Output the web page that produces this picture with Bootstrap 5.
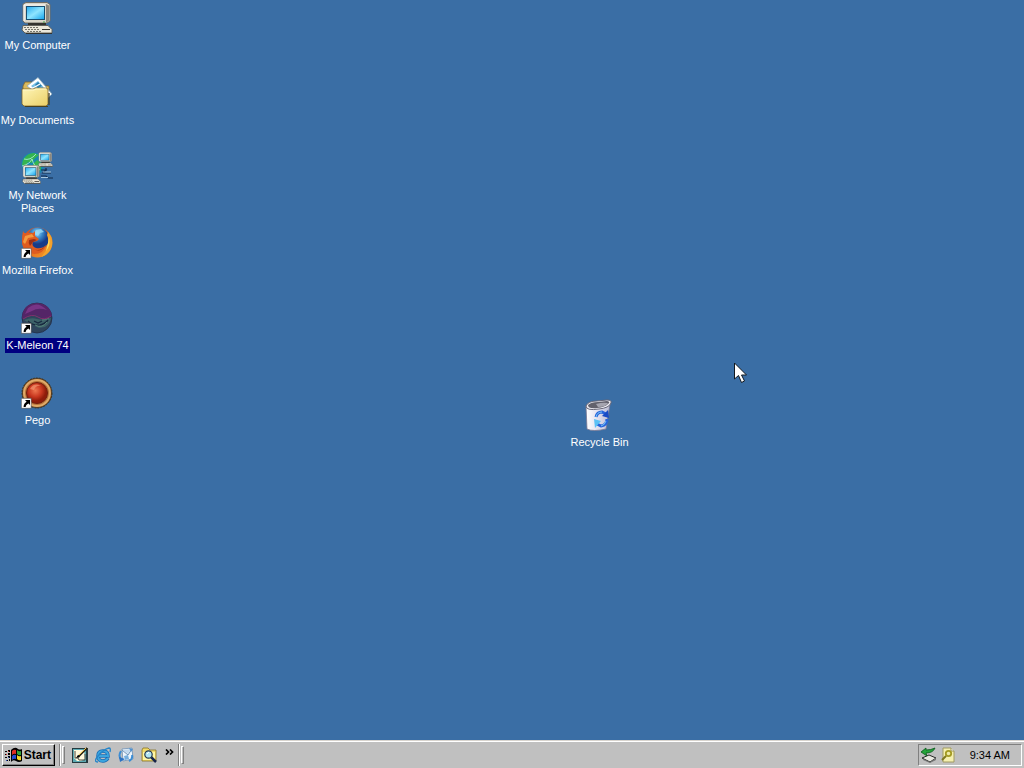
<!DOCTYPE html>
<html lang="en">
<head>
<meta charset="utf-8">
<meta name="viewport" content="width=device-width, initial-scale=1">
<title>Desktop</title>
<link href="https://cdn.jsdelivr.net/npm/bootstrap@5.3.0/dist/css/bootstrap.min.css" rel="stylesheet">
<style>
  body { background: #3a6ea5; font: 11px/13px "Liberation Sans", Arial, sans-serif; color: #000; cursor: default; }
  .desk-icon { width: 75px; height: 75px; padding-top: 2px; color: #fff; line-height: 13px; cursor: default; }
  .desk-icon:hover { color: #fff; }
  .desk-icon > svg { width: 32px; height: 32px; margin: 0 1px 5px 0; flex: none; }
  .desk-label { padding: 0 2px; }
  .desk-label.long { white-space: nowrap; padding: 0; }
  .desk-label.selected { background: #000080; padding: 1px; margin-top: -1px; white-space: nowrap; }
  .bin { left: 562px; top: 397px; }
  .pointer { left: 734px; top: 362px; width: 13px; height: 22px; }
  .taskbar { height: 28px; background: #c0c0c0; border-top: 1px solid #d8d4ce; box-shadow: inset 0 1px #fff; padding: 3px 2px 2px; }
  .start { width: 53px; height: 22px; padding: 0 3px 0 2px; border: 1px solid; border-color: #fff #000 #000 #fff; box-shadow: inset -1px -1px #808080; background: #c0c0c0; font-weight: bold; font-size: 12px; color: #000; border-radius: 0; }
  .start svg { width: 18px; height: 16px; flex: none; }
  .divider { width: 2px; height: 22px; border-left: 1px solid #808080; border-right: 1px solid #fff; margin-right: 1px; }
  .grip { width: 3px; height: 18px; border: 1px solid; border-color: #fff #808080 #808080 #fff; }
  .quick { width: 23px; height: 22px; padding: 3px 4px 3px 3px; border: 0; background: transparent; }
  .quick svg, .tray svg { width: 16px; height: 16px; display: block; }
  .more { width: 17px; height: 22px; padding: 0 0 6px; border: 0; background: transparent; }
  .more svg { width: 9px; height: 6px; display: block; margin: 0 auto; }
  .tray { height: 22px; width: 104px; padding: 0 11px 0 2px; border: 1px solid; border-color: #808080 #fff #fff #808080; }
  .tray time { padding-top: 1px; }
</style>
</head>
<body class="vh-100 d-flex flex-column overflow-hidden user-select-none">
<svg width="0" height="0" class="position-absolute" aria-hidden="true">
  <defs>
    <linearGradient id="screen" x1="0" y1="0" x2="1" y2="1"><stop offset="0" stop-color="#2baef0"/><stop offset=".5" stop-color="#8fe5ff"/><stop offset="1" stop-color="#18a6ee"/></linearGradient>
    <linearGradient id="paper" x1="0" y1="0" x2="1" y2="1"><stop offset="0" stop-color="#fff6b8"/><stop offset="1" stop-color="#ebcf66"/></linearGradient>
    <linearGradient id="fox" x1="0" y1="0" x2="1" y2="1"><stop offset="0" stop-color="#d9481c"/><stop offset=".55" stop-color="#e8701d"/><stop offset="1" stop-color="#f4a32a"/></linearGradient>
    <radialGradient id="globe" cx=".45" cy=".25"><stop offset="0" stop-color="#9fdcff"/><stop offset=".5" stop-color="#3888ca"/><stop offset="1" stop-color="#173b88"/></radialGradient>
    <radialGradient id="ball" cx=".42" cy=".38"><stop offset="0" stop-color="#ee7750"/><stop offset=".6" stop-color="#c93820"/><stop offset="1" stop-color="#8f1c0b"/></radialGradient>
    <linearGradient id="can" x1="0" x2="1"><stop offset="0" stop-color="#fff"/><stop offset=".4" stop-color="#e8e6f2"/><stop offset="1" stop-color="#b9bbd4"/></linearGradient>
    <g id="shortcut"><path fill="#fff" stroke="#444" stroke-width=".6" d="M.3 21.300h9.900v10H.3z"/><path d="M4 23h5v5l-1.500-1.500C5.600 27.500 4.800 28.500 4.700 30H2.600c0-2.500 1.200-4.200 3-5.300z"/></g>
    <g id="pc">
      <path fill="#d9d5c8" stroke="#716e66" d="M2 2 5 .5h21l3 2V19l-3 2H4l-2-2z"/>
      <path fill="#8b877e" d="m25 2 3 1.500v15L25 21z"/><path fill="none" stroke="#fff" d="M3 19V3h21"/>
      <path fill="#174f73" d="M5 4h19v14H5z"/><path fill="url(#screen)" d="M6 5h17v12H6z"/>
      <path fill="#34322e" d="M7 21h18v2.500H7z"/><path fill="#ebe7da" stroke="#5d5b53" stroke-width=".9" d="M2 23.500h25l4 4V31H4l-3-3z"/>
      <path stroke="#77766c" stroke-width="1.100" stroke-dasharray="2 1" d="M3 25.500h15M4 27.500h15M6 29.500h14"/><path fill="#33322e" d="M21 27h8v1h-8zM5 31h26v1H5z"/><path fill="#4ba34b" d="M22 19.500h2v1h-2z"/>
    </g>
  </defs>
</svg>

<main class="flex-grow-1 position-relative">
  <nav class="d-flex flex-column align-items-start" aria-label="Desktop">
    <a href="#" class="desk-icon d-flex flex-column align-items-center text-center text-decoration-none">
      <svg viewBox="0 0 32 32" aria-hidden="true"><use href="#pc"/></svg>
      <span class="desk-label">My Computer</span>
    </a>
    <a href="#" class="desk-icon d-flex flex-column align-items-center text-center text-decoration-none">
      <svg viewBox="0 0 32 32" aria-hidden="true">
        <path fill="#d9b95d" stroke="#80662a" stroke-width=".8" d="m2 9 2-4h8l3 4h13v5H2z"/>
        <path fill="#fff" stroke="#8ba9bb" stroke-width=".8" d="m6 9 11-8.500L31 17l-6 6z"/>
        <path fill="#77bfe5" d="m10 9 7-5 10 11-5 4z"/><path fill="#297eaf" d="m14 8 3-3 4 4-4 2z"/><path stroke="#fff" stroke-width="1.300" d="m12 11 7-4M20 14l4-4"/>
        <path fill="url(#paper)" stroke="#80662a" stroke-width=".8" d="M1 12h11l2-1h12l1 2v14l-2 2H3l-2-2z"/>
        <path stroke="#fff8c8" fill="none" d="M2 13h11l2-1h10"/><path stroke="#49401d" stroke-width="1.200" d="M4 29.500h23M28 16v12"/>
      </svg>
      <span class="desk-label long">My Documents</span>
    </a>
    <a href="#" class="desk-icon d-flex flex-column align-items-center text-center text-decoration-none">
      <svg viewBox="0 0 32 32" aria-hidden="true">
        <circle cx="12" cy="12" r="11.500" fill="#1789ae"/>
        <path fill="#35b450" d="M2 8Q6 1 13 1l5 2-5 4-2 4-4-1-2 4-4-1zM12 12l4-4 4 3v6l-4 5-4-3zM3 15l5 2-1 5-4-3z"/>
        <path fill="none" stroke="#a7edcf" stroke-width=".9" d="M3 7Q9 9 15 2M1 14q8-2 10-7 2 8 8 11"/>
        <svg x="17" width="15" height="15" viewBox="0 0 32 32"><use href="#pc"/></svg>
        <svg x="1" y="13" width="19" height="19" viewBox="0 0 32 32"><use href="#pc"/></svg>
        <path stroke="#102b4c" stroke-width="1.200" fill="none" d="M20 18h5l-3 3h8M20 24h5l2 2h5M25 16v3"/>
        <path stroke="#a8c7e0" fill="none" d="M22 20h8M20 25.500h7"/>
      </svg>
      <span class="desk-label">My Network Places</span>
    </a>
    <a href="#" class="desk-icon d-flex flex-column align-items-center text-center text-decoration-none">
      <svg viewBox="0 0 32 32" aria-hidden="true">
        <circle cx="16.500" cy="15.500" r="15" fill="url(#fox)"/>
        <circle cx="17" cy="11.500" r="11" fill="url(#globe)"/>
        <path fill="#9bdcf5" d="m15 3 5-1 3 3-4 1-2 3-4-2z" opacity=".8"/>
        <path fill="#f3a32c" d="M27 5q5 5 4 13-2 9-11 12 5-5 7-11 1-7-1-11z"/>
        <path fill="#ffdb5a" d="M28 10q2 8-3 14 1-5 2-8z"/>
        <path fill="#df5c20" d="M2 4q1 3 4 2 3-1 6 0l2-2v5l4 3-2 2-4 1q-2 4 3 6 6 1 10-3-2 9-12 9Q1 25 1 14q0-6 1-10z"/>
        <path fill="#f49a3f" d="m4 9 7-2 2 3-6 1-3 6-2-2z"/><path fill="#9c3015" d="m8 13 5-1 3 1-4 2-3 4q-2-3-1-6zM12 22q7 3 12-3-4 7-12 3z"/>
        <use href="#shortcut"/>
      </svg>
      <span class="desk-label long">Mozilla Firefox</span>
    </a>
    <a href="#" class="desk-icon d-flex flex-column align-items-center text-center text-decoration-none">
      <svg viewBox="0 0 32 32" aria-hidden="true">
        <circle cx="16" cy="16" r="15" fill="#2e455c" stroke="#20263e" stroke-width=".7"/>
        <path fill="#542567" d="M1 17Q1 1 17 1q12 1 14 13-4 3-10 2-8-7-20 1z"/>
        <path fill="#783486" d="M7 6q9-8 19 2-9-3-15 1l-7 3z"/>
        <path fill="#3d6268" d="M3 18q8-3 13-1 7 2 14-1-1 6-6 9l-6 1-8-4z"/>
        <path fill="none" stroke="#182a40" stroke-width="1.300" d="M7 19q5 5 12 4 5-1 8-5M13 19l4 2 4-2"/>
        <path fill="none" stroke="#558178" d="M21 18q4 0 7-2M14 23q7 4 12-3"/><path fill="none" stroke="#862b6f" d="M2 17q9-6 15-2t13-1"/>
        <use href="#shortcut"/>
      </svg>
      <span class="desk-label selected">K-Meleon 74</span>
    </a>
    <a href="#" class="desk-icon d-flex flex-column align-items-center text-center text-decoration-none">
      <svg viewBox="0 0 32 32" aria-hidden="true">
        <circle cx="16" cy="16" r="15" fill="#684124" stroke="#40371d" stroke-dasharray="2 1"/>
        <circle cx="16" cy="16" r="13" fill="#b87239" stroke="#dfaa68" stroke-width="2"/>
        <circle cx="16" cy="16" r="10.500" fill="url(#ball)" stroke="#73200e"/>
        <path fill="#f49b75" opacity=".65" d="M9 12q4-7 11-3-5-1-7 4z"/>
        <use href="#shortcut"/>
      </svg>
      <span class="desk-label">Pego</span>
    </a>
  </nav>
  <a href="#" class="desk-icon bin position-absolute d-flex flex-column align-items-center text-center text-decoration-none">
    <svg viewBox="0 0 32 32" aria-hidden="true">
      <path fill="url(#can)" stroke="#777691" stroke-width=".8" d="M3 7 4 30q6 3 19 0l4-25z"/>
      <path fill="#eeedf4" stroke="#686777" d="M3 7Q5 2 14 2l10-1q5 0 4 3-2 5-12 6-13 2-13-3z"/>
      <path fill="#62616c" d="M5 6q3-3 10-3l9-1q4 1 1 3-3 3-11 4-9 1-9-3z"/><path fill="#a5a4af" d="M13 5q7-2 12-1-2 4-10 4z"/>
      <path fill="none" stroke="#2663db" stroke-width="3" d="M13 18q1-5 6-5l4 2M24 20q0 6-6 7l-4-2"/>
      <path fill="#184bc5" d="m25 11 1 8-7-2z"/><path fill="#5bc1f5" d="m11 20 7 2-6 7z"/><path fill="none" stroke="#79c7f7" d="M13 18q1-5 6-5M18 27q4-1 5-5"/>
    </svg>
    <span class="desk-label">Recycle Bin</span>
  </a>
  <svg class="pointer position-absolute" viewBox="0 0 13 22" aria-hidden="true"><path fill="#fff" stroke="#101820" d="M.5 1v16l4-3.500 3 7 3-1.500-3-6h5z"/></svg>
</main>

<footer class="taskbar d-flex align-items-center flex-shrink-0">
  <button type="button" class="start d-flex align-items-center justify-content-between">
    <svg viewBox="0 0 18 16" aria-hidden="true">
      <path d="M6 3q4-4 7-1 2 1 4 0v12q-3 2-6 0-3-2-5 1zM0 4h2v1H0zM3 3h2v2H3zM0 7h2v1H0zM3 6h2v2H3zM0 10h2v1H0zM3 9h2v2H3zM1 13h2v1H1zM4 12h1v2H4z"/>
      <path fill="#e12e24" d="M7 4q2-2 4-1v4Q9 6 7 8z"/><path fill="#31a33b" d="M12 3q2 2 4 1v4q-2 1-4-1z"/><path fill="#274cd1" d="M7 9q2-2 4-1v4q-2-1-4 1z"/><path fill="#f4d529" d="M12 8q2 2 4 1v4q-2 1-4-1z"/>
      <path fill="#d12c2c" d="M3 4h1v1H3zM1 7h1v1H1z"/><path fill="#2847bb" d="M3 10h1v1H3zM1 13h1v1H1z"/>
    </svg>
    <span>Start</span>
  </button>
  <div class="divider ms-1"></div><div class="grip me-1"></div>
  <nav class="d-flex align-items-center" aria-label="Quick Launch">
    <button type="button" class="quick" aria-label="Show Desktop"><svg viewBox="0 0 16 16">
      <path fill="#263b40" d="M0 1h16v15H0z"/><path fill="#5dabb4" d="M1 2h13v13H1z"/><path fill="#fff9dc" d="M2 3h10l1 9-4 2H5l-3-3z"/><path fill="none" stroke="#4b4b43" d="M3 4v7h3l1 2h6V7"/><path fill="none" stroke="#272316" stroke-width="1.800" d="m6 10 9-9"/><path stroke="#f3c64d" d="m7 8 7-7"/><path d="M4 11 6 8l2 2z"/>
    </svg></button>
    <button type="button" class="quick" aria-label="Internet Explorer"><svg viewBox="0 0 16 16">
      <path fill="none" stroke="#176bb5" stroke-width="3.500" d="M13 11q-2 3-5 3-5 0-5-5 0-5 5-5 5 0 5 5H4"/><path fill="none" stroke="#3ba5df" stroke-width="2" d="M13 11q-2 3-5 3-5 0-5-5 0-5 5-5 5 0 5 5H4"/><path fill="none" stroke="#2585c9" stroke-width="1.300" d="M3 15q-5 0 0-6 6-7 11-8 2 0 1 4"/>
    </svg></button>
    <button type="button" class="quick" aria-label="Outlook Express"><svg viewBox="0 0 16 16">
      <path fill="#edf5fc" stroke="#6f90b5" stroke-width=".8" d="m4 2 10-1 1 11-10 2z"/><path fill="#c1d9ef" d="m5 3 8-1-3 5z"/><path fill="none" stroke="#6d92b8" d="m4 3 6 5 4-6"/><path fill="none" stroke="#3c8dd4" stroke-width="2" d="M3 4q-3 5 0 8M14 8q1 4-3 6"/><path fill="#2b72c4" d="m1 10 6 2-5 3z"/><path fill="#75aede" d="m6 9 4-1 1 4-4 1z"/><path fill="#4f91cf" d="m11 1 4 1-2 3z"/>
    </svg></button>
    <button type="button" class="quick" aria-label="Search Files"><svg viewBox="0 0 16 16">
      <path fill="#f3db69" stroke="#867224" stroke-width=".8" d="m1 3 1-2h5l2 2h6v11H1z"/><path fill="#fff6a4" d="M2 5h12v8H2z"/><path stroke="#17254b" stroke-width="2.500" d="m10 10 5 5"/><circle cx="7.500" cy="7.500" r="3.700" fill="#b2e6f4" stroke="#26384d" stroke-width="1.200"/><path stroke="#fff" d="m6 7 2-2"/>
    </svg></button>
    <button type="button" class="more" aria-label="More"><svg viewBox="0 0 9 6"><path fill="none" stroke="#000" stroke-width="1.700" d="m1 .5 2.500 2.500L1 5.500M5 .5 7.500 3 5 5.500"/></svg></button>
  </nav>
  <div class="divider"></div><div class="grip"></div>
  <div class="tray d-flex align-items-center ms-auto">
    <svg viewBox="0 0 16 16" aria-hidden="true"><path fill="#e7e7df" stroke="#282a28" d="m1 11 7-3 7 3-6 4z"/><path fill="#777" d="m2 12 7 3 6-4v2l-6 3-7-3z"/><path fill="#25a43a" stroke="#075818" stroke-width=".8" d="m0 5 5-4v2q5 0 9-2-2 5-9 5l1 3z"/></svg>
    <svg class="ms-1" viewBox="0 0 16 16" aria-hidden="true"><path fill="#f5f0af" stroke="#a09a62" d="M2 1h8l3 3v11H2z"/><path fill="#fff" stroke="#9a945f" d="M10 1v3h3"/><circle cx="7.500" cy="6.500" r="2.700" fill="#eeeaa6" stroke="#a39a22" stroke-width="1.800"/><path stroke="#7e781f" stroke-width="2" d="m5 9-4 4"/></svg>
    <time class="ms-auto text-nowrap" datetime="09:34">9:34 AM</time>
  </div>
</footer>
<script src="https://cdn.jsdelivr.net/npm/bootstrap@5.3.0/dist/js/bootstrap.bundle.min.js"></script>
</body>
</html>
